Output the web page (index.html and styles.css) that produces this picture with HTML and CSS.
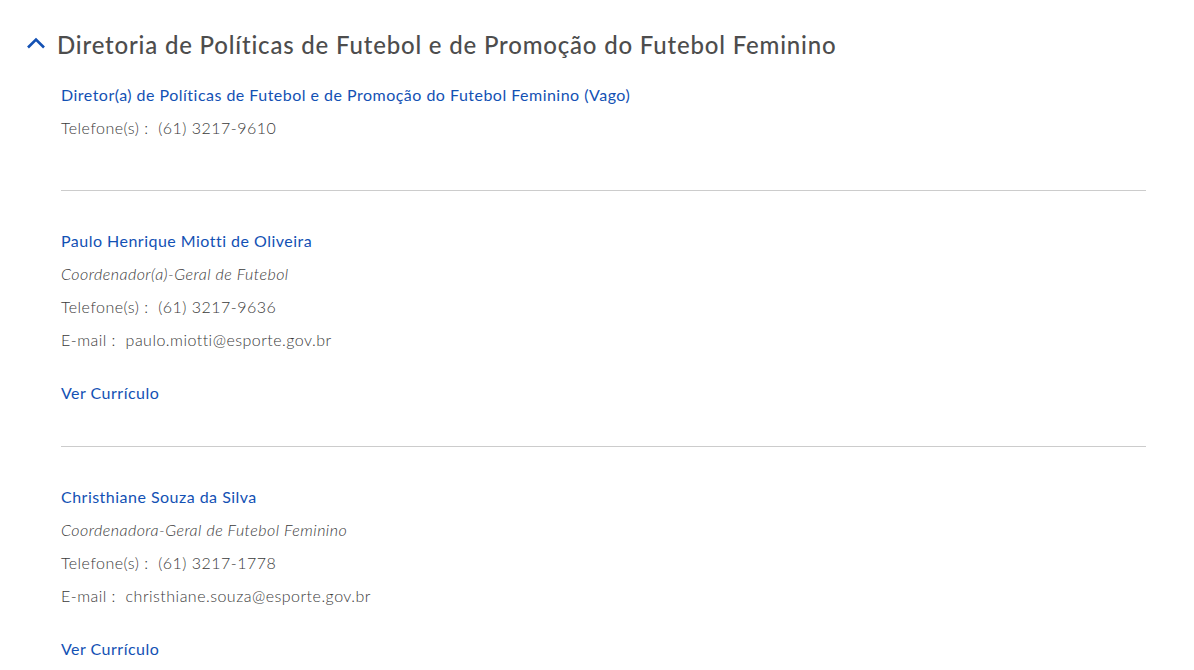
FILE: index.html
```html
<!DOCTYPE html>
<html lang="pt-BR">
<head>
    <meta charset="UTF-8">
    <meta name="viewport" content="width=device-width, initial-scale=1.0">
    <title>Diretoria de Políticas de Futebol e de Promoção do Futebol Feminino</title>
    <link rel="stylesheet" href="styles.css">
</head>
<body>

    <div class="accordion">
        <div class="accordion-header">
            <svg class="chevron" width="20" height="12" viewBox="0 0 20 12">
                <polyline points="2,10.5 10,2.5 18,10.5" fill="none" stroke="#1351b4" stroke-width="2.6"/>
            </svg>
            <h2>Diretoria de Políticas de Futebol e de Promoção do Futebol Feminino</h2>
        </div>

        <div class="members">
            <div class="member member-first">
                <p class="name">Diretor(a) de Políticas de Futebol e de Promoção do Futebol Feminino (Vago)</p>
                <p>Telefone(s) : &nbsp;(61) 3217-9610</p>
            </div>

            <div class="member">
                <p class="name">Paulo Henrique Miotti de Oliveira</p>
                <p class="role">Coordenador(a)-Geral de Futebol</p>
                <p>Telefone(s) : &nbsp;(61) 3217-9636</p>
                <p>E-mail : &nbsp;paulo.miotti@esporte.gov.br</p>
                <p class="cv"><a href="#">Ver Currículo</a></p>
            </div>

            <div class="member">
                <p class="name">Christhiane Souza da Silva</p>
                <p class="role">Coordenadora-Geral de Futebol Feminino</p>
                <p>Telefone(s) : &nbsp;(61) 3217-1778</p>
                <p>E-mail : &nbsp;christhiane.souza@esporte.gov.br</p>
                <p class="cv"><a href="#">Ver Currículo</a></p>
            </div>
        </div>
    </div>

</body>
</html>
```

FILE: styles.css
```css
body {
    margin: 0;
    background-color: white;
    color: #3a3a3a;
    font-family: Lato, 'Open Sans', sans-serif;
}
.accordion {
    padding: 21px 48px 0 26px;
}
.accordion-header {
    display: flex;
    align-items: center;
    gap: 11px;
    height: 46px;
}
.chevron {
    flex-shrink: 0;
    margin-top: -2px;
}
.accordion-header h2 {
    margin: 0;
    font-size: 24px;
    font-weight: 500;
    color: #4d4d4d;
    letter-spacing: 0.81px;
}
.members {
    padding-left: 35px;
    padding-top: 11px;
}
.member {
    padding: 33px 0 37px;
    border-bottom: 1px solid #ccc;
}
.member:last-child {
    border-bottom: none;
}
.member-first {
    padding-top: 0;
    padding-bottom: 46px;
}
.member p {
    margin: 0;
    font-size: 16px;
    font-weight: 300;
    line-height: 33px;
    letter-spacing: 0.48px;
}
.member .name {
    color: #1351b4;
    font-weight: 400;
}
.member .role {
    font-style: italic;
}
.member .cv {
    margin-top: 20px;
}
.member .cv a {
    color: #1351b4;
    font-weight: 400;
    text-decoration: none;
}
```
